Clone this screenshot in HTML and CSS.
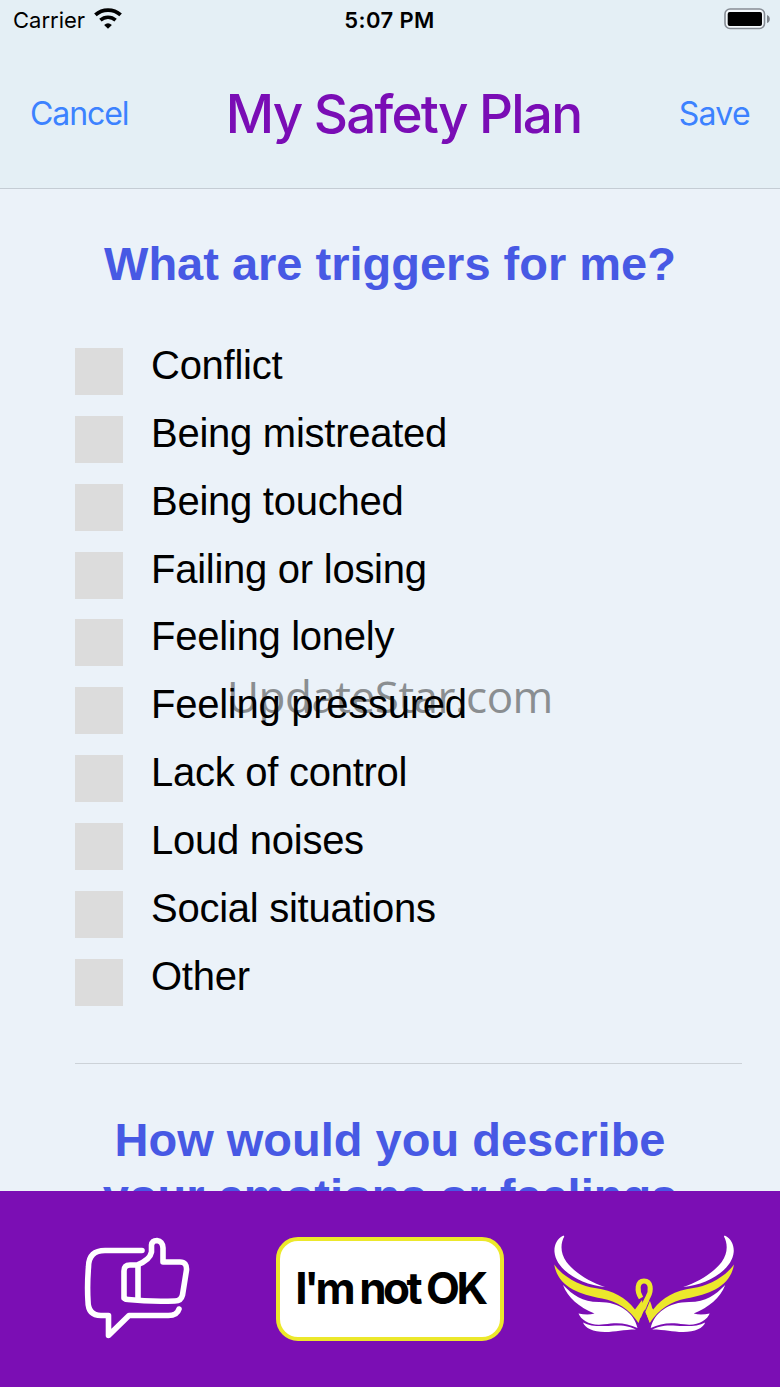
FILE: index.html
```
<!DOCTYPE html>
<html lang="en">
<head>
    <meta charset="UTF-8">
    <meta name="viewport" content="width=device-width, initial-scale=1.0">
    <title>My Safety Plan</title>
    <link rel="stylesheet" href="styles.css">
</head>
<body>

<div class="screen">
    <header class="header">
        <div class="status-bar">
            <div class="carrier">
                <span>Carrier</span>
                <svg class="wifi" viewBox="0 0 28 21" width="28" height="21">
                    <path d="M1.400 6.900 A19 19 0 0 1 26.600 6.900" fill="none" stroke="#000" stroke-width="3.800"/>
                    <path d="M6.400 12.100 A11.200 11.200 0 0 1 21.600 12.100" fill="none" stroke="#000" stroke-width="3.500"/>
                    <path d="M14 20.800 L10.100 16.900 A5.900 5.900 0 0 1 17.900 16.900 Z"/>
                </svg>
            </div>
            <span class="clock">5:07 PM</span>
            <svg class="battery" viewBox="0 0 46 22" width="46" height="22">
                <rect x="1" y="1" width="39.5" height="19.5" rx="5" fill="#f4f9fc" stroke="#868c94" stroke-width="1.6"/>
                <rect x="3.7" y="4" width="34.3" height="14" rx="2"/>
                <path d="M43 7 Q45.8 8 45.8 11 Q45.8 14 43 15 Z" fill="#7d838a"/>
            </svg>
        </div>
        <nav class="nav-bar">
            <a class="nav-link cancel">Cancel</a>
            <h1>My Safety Plan</h1>
            <a class="nav-link save">Save</a>
        </nav>
    </header>

    <main class="content">
        <div class="watermark">UpdateStar.com</div>
        <section class="question">
            <h2>What are triggers for me?</h2>
            <ul class="options">
                <li><span class="box"></span><span class="label">Conflict</span></li>
                <li><span class="box"></span><span class="label">Being mistreated</span></li>
                <li><span class="box"></span><span class="label">Being touched</span></li>
                <li><span class="box"></span><span class="label">Failing or losing</span></li>
                <li><span class="box"></span><span class="label">Feeling lonely</span></li>
                <li><span class="box"></span><span class="label">Feeling pressured</span></li>
                <li><span class="box"></span><span class="label">Lack of control</span></li>
                <li><span class="box"></span><span class="label">Loud noises</span></li>
                <li><span class="box"></span><span class="label">Social situations</span></li>
                <li><span class="box"></span><span class="label">Other</span></li>
            </ul>
        </section>
        <section class="question">
            <h2>How would you describe<br>your emotions or feelings</h2>
        </section>
    </main>

    <footer class="tab-bar">
        <svg class="thumb" viewBox="0 0 130 125" width="130" height="125">
            <g fill="none" stroke="#fff" stroke-width="5.6" stroke-linecap="round" stroke-linejoin="round">
                <!-- speech bubble -->
                <path d="M72 25.500 H36 Q18.500 25 18.500 42 Q17 60 18 76 Q18 90.500 31 90.500 H38.500 V110.500 L59 90.500 H97 Q107 91 109 84"/>
                <!-- hand -->
                <path d="M54 73 V46 Q54 40 60 40 H67 Q80 35 81.500 27 V20 Q82 15.500 87 15.500 Q92.500 16 93 23 V37 H110 Q117 37 116.500 45 L112.500 70 Q111 76 105 76 Q80 77 58 74.500 Q54 74.500 54 71"/>
                <path d="M68 41 V74"/>
            </g>
        </svg>
        <button class="not-ok">I'm not OK</button>
        <svg class="wings" viewBox="0 0 200 115" width="200" height="115">
            <defs>
                <g id="wing">
                    <path fill="#fff" d="M18.500 10.500 C11.500 13.500 9 21 9.500 27 C11 45 36 60 60 62 C44 57 29 47 21.500 37 C15 28 15.500 18 19.300 11.500 Z"/>
                    <path fill="#ece82b" d="M9.200 39.500 C19 53 36 61 50 63 C69 66 80 72 90 84.500 L97 75 L98.500 84 L93.500 98 C84 84 72 76 57 73.500 C32 69 13 61 9.200 39.500 Z"/>
                    <path fill="#fff" d="M18 60 C28 70 37 77 54 77 C75 77 89 88 92.500 103 C82 98 73 97 59 99.300 C46 101.500 36 95 33.500 88.500 C39 89.500 44 90 49.500 88.500 C34 82 23 73 18 60 Z"/>
                    <path fill="#fff" d="M38 97.500 C47 102.500 60 101 70 100.500 C80 100 86 102 91 104.500 C78 104.500 71 107 60 107 C48 107 40 103 38 97.500 Z"/>
                </g>
            </defs>
            <use href="#wing"/>
            <use href="#wing" transform="translate(198.200) scale(-1 1)"/>
            <!-- ribbon -->
            <path fill="#ece82b" d="M99 79 L104 74 C108 82 108.500 88 105 97.500 L99 84 Z"/>
            <path fill="none" stroke="#7b0eb4" d="M105.500 73 C103 80 100.500 85 98.500 90"/>
            <path fill="none" stroke="#ece82b" stroke-width="5" d="M96 73 C91.500 66 92 56 99 56 C106.500 56 106.500 66 103 72 C100 78 96 85 93.500 92"/>
        </svg>
    </footer>
</div>

</body>
</html>
```

FILE: styles.css
```
* {
    box-sizing: border-box;
}
body {
    margin: 0;
    font-family: "Liberation Sans", Arial, sans-serif;
    background-color: #ebf2f9;
}
.screen {
    display: flex;
    flex-direction: column;
    height: 1387px;
    overflow: hidden;
}
.header {
    height: 189px;
    flex: none;
    background-color: #e4eff5;
    border-bottom: 1px solid #c4ccd4;
    font-family: Inter, sans-serif;
}
.status-bar {
    display: grid;
    grid-template-columns: 1fr auto 1fr;
    align-items: center;
    height: 40px;
    padding: 0 10px 0 13px;
    font-size: 22px;
}
.carrier {
    display: flex;
    align-items: center;
    gap: 9px;
}
.wifi {
    margin-top: -3px;
}
.clock {
    font-weight: 600;
    letter-spacing: 0.4px;
    margin-right: 4px;
}
.battery {
    justify-self: end;
    margin-top: -2px;
}
.nav-bar {
    display: flex;
    justify-content: space-between;
    align-items: center;
    height: 146px;
    padding: 0 30px;
}
.nav-link {
    color: #3c82ff;
    font-size: 32px;
    letter-spacing: -1.1px;
}
.save {
    letter-spacing: -0.7px;
}
.nav-bar h1 {
    margin: 0;
    padding-top: 2px;
    color: #7a0db5;
    font-size: 53px;
    font-weight: 500;
    letter-spacing: -1.8px;
}
.content {
    position: relative;
    z-index: 0;
    flex: 1;
    overflow: hidden;
}
.question h2 {
    margin: 0;
    padding-top: 48px;
    color: #4759e4;
    font-size: 47px;
    line-height: 56px;
    text-align: center;
    white-space: nowrap;
}
.question:nth-child(2) h2 {
    padding-top: 47px;
}
.options {
    list-style: none;
    margin: 56px 38px 0 75px;
    padding: 0 0 36px;
    border-bottom: 1px solid #ccd2d8;
}
.options li {
    display: flex;
    gap: 28px;
    height: 67.86px;
}
.box {
    width: 48px;
    height: 47px;
    background-color: #dcdcdc;
}
.label {
    font-size: 40px;
    line-height: 46px;
    letter-spacing: -0.26px;
    margin-top: -6px;
}
.watermark {
    position: absolute;
    z-index: -1;
    left: 227px;
    top: 477px;
    color: #8a8e91;
    font-family: "Open Sans", sans-serif;
    font-size: 44px;
    line-height: 60px;
    letter-spacing: -0.5px;
}
.tab-bar {
    display: flex;
    flex: none;
    height: 196px;
    padding: 34px 35px 0 70px;
    background-color: #7b0eb4;
}
.not-ok {
    width: 228px;
    height: 104px;
    margin: 12px 41px 0 76px;
    padding: 0 0 2px;
    border: 4px solid #ece82b;
    border-radius: 22px;
    background-color: #fff;
    color: #000;
    font-family: Inter, sans-serif;
    font-size: 44px;
    font-weight: 700;
    letter-spacing: -3.5px;
}
.thumb,
.wings {
    flex: none;
}
```
